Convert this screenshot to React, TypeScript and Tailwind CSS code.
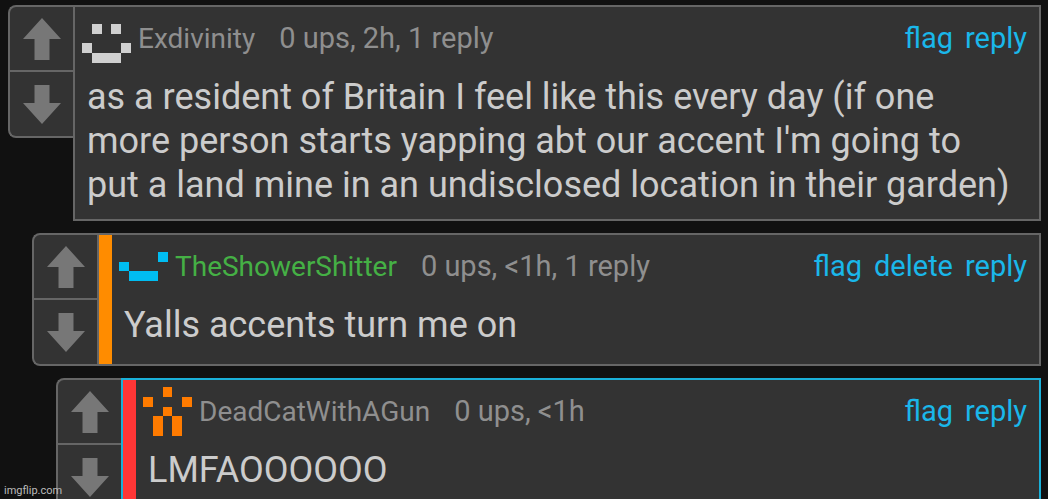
type CommentData = {
  user: string;
  meta: string;
  text: string;
  actions: string[];
  pixels: string[];
  indent: string;
  iconColor: string;
  userColor: string;
  barColor?: string;
  borderColor: string;
};

const comments: CommentData[] = [
  {
    user: "Exdivinity",
    meta: "0 ups, 2h, 1 reply",
    text: "as a resident of Britain I feel like this every day (if one more person starts yapping abt our accent I'm going to put a land mine in an undisclosed location in their garden)",
    actions: ["flag", "reply"],
    pixels: [".....", ".#.#.", ".....", "#...#", ".###."],
    indent: "ml-2",
    iconColor: "text-[#d0d0d0]",
    userColor: "text-[#8f8f8f]",
    borderColor: "border-[#666]",
  },
  {
    user: "TheShowerShitter",
    meta: "0 ups, <1h, 1 reply",
    text: "Yalls accents turn me on",
    actions: ["flag", "delete", "reply"],
    pixels: [".....", "....#", "#....", ".###.", "....."],
    indent: "ml-8",
    iconColor: "text-[#00bdf2]",
    userColor: "text-[#45b045]",
    barColor: "bg-[#ff8c00]",
    borderColor: "border-[#666]",
  },
  {
    user: "DeadCatWithAGun",
    meta: "0 ups, <1h",
    text: "LMFAOOOOOO",
    actions: ["flag", "reply"],
    pixels: ["..#..", "#...#", "..#..", ".#.#.", ".#.#."],
    indent: "ml-14",
    iconColor: "text-[#ff7b00]",
    userColor: "text-[#8f8f8f]",
    barColor: "bg-[#ff3636]",
    borderColor: "border-[#1ab0d8]",
  },
];

function PixelIcon({ rows, className }: { rows: string[]; className: string }) {
  return (
    <svg
      viewBox="0 0 5 5"
      className={`size-[49px] shrink-0 ${className}`}
      fill="currentColor"
      shapeRendering="crispEdges"
      aria-hidden="true"
    >
      {rows.map((row, y) =>
        row.split("").map((c, x) =>
          c === "#" ? <rect key={`${x}-${y}`} x={x} y={y} width="1" height="1" /> : null
        )
      )}
    </svg>
  );
}

function Votes() {
  return (
    <div className="flex w-[65px] shrink-0 flex-col self-start rounded-l-lg border-2 border-r-0 border-[#666] bg-[#333] text-[#777]">
      <button aria-label="Upvote" className="flex h-[65px] items-center justify-center border-b-2 border-[#666]">
        <svg width="38" height="42" viewBox="0 0 38 42" fill="currentColor">
          <path d="M19 0 38 21H26.500V42H11.500V21H0z" />
        </svg>
      </button>
      <button aria-label="Downvote" className="flex h-16 items-center justify-center">
        <svg width="38" height="39" viewBox="0 0 38 39" fill="currentColor">
          <path d="M19 39 38 18H26.500V0H11.500V18H0z" />
        </svg>
      </button>
    </div>
  );
}

function Comment({ data }: { data: CommentData }) {
  return (
    <article className={`mr-[7px] flex ${data.indent}`}>
      <Votes />

      <div className={`flex min-w-0 flex-1 border-2 bg-[#333] ${data.borderColor}`}>
        {data.barColor && <div className={`w-[13px] shrink-0 ${data.barColor}`} />}

        <div className="min-w-0 flex-1 pb-3">
          <header className="flex items-center pt-[7px] pr-3 pl-[7px] text-[29px] leading-[49px]">
            <PixelIcon rows={data.pixels} className={data.iconColor} />
            <a href="#" className={`ml-[7px] text-[28px] leading-[49px] ${data.userColor}`}>
              {data.user}
            </a>
            <span className="ml-6 text-[#8f8f8f]">{data.meta}</span>

            <nav className="ml-auto flex gap-3 text-[#1ab7ea]">
              {data.actions.map((action) => (
                <a key={action} href="#">
                  {action}
                </a>
              ))}
            </nav>
          </header>

          <p className="mt-3 pr-5 pl-3 text-[36px] leading-[44px] text-[#ccc]">{data.text}</p>
        </div>
      </div>
    </article>
  );
}

export default function App() {
  return (
    <main className="relative flex h-screen flex-col gap-3 overflow-hidden bg-[#111] pt-[5px] font-['Roboto',sans-serif]">
      {comments.map((comment) => (
        <Comment key={comment.user} data={comment} />
      ))}

      <span className="absolute bottom-0 left-1 text-[11px] leading-4 text-[#bbb]">imgflip.com</span>
    </main>
  );
}
